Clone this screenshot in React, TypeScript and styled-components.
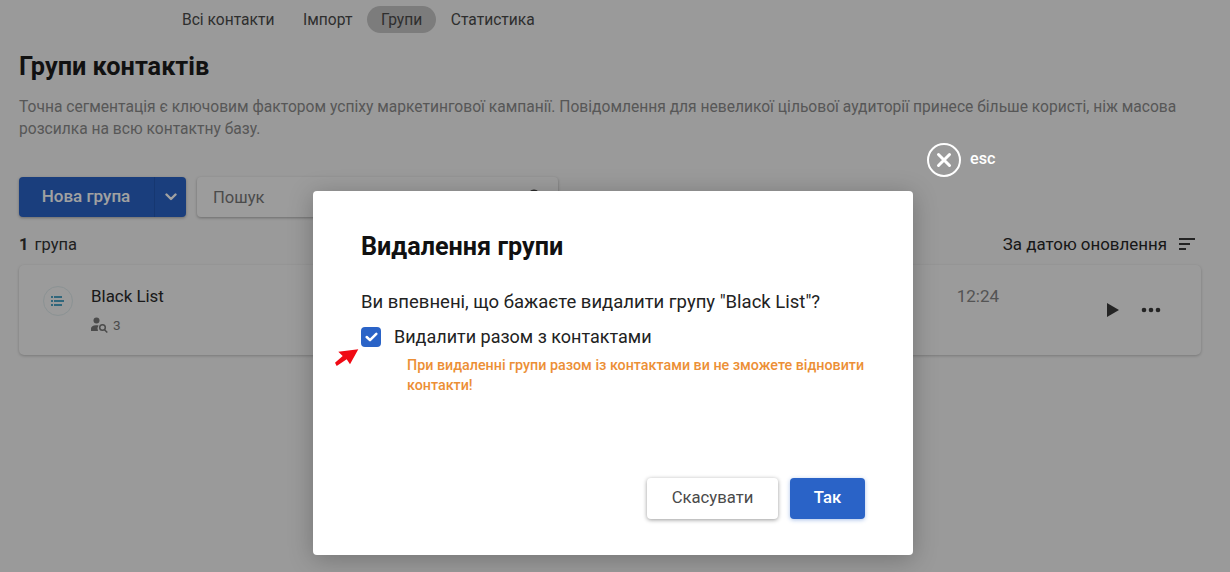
import styled, { createGlobalStyle } from 'styled-components';

const GlobalStyle = createGlobalStyle`
  html, body {
    margin: 0;
    padding: 0;
    background: #f4f4f4;
    font-family: Roboto, "Noto Sans", sans-serif;
    overflow: hidden;
  }
`;

const tabs = ['Всі контакти', 'Імпорт', 'Групи', 'Статистика'];

export default function App() {
  return (
    <Page>
      <GlobalStyle />
      <Nav>
        {tabs.map((tab) => (
          <Tab key={tab} $active={tab === 'Групи'}>
            {tab}
          </Tab>
        ))}
      </Nav>

      <Content>
        <PageTitle>Групи контактів</PageTitle>
        <Description>
          Точна сегментація є ключовим фактором успіху маркетингової кампанії. Повідомлення для невеликої цільової
          аудиторії принесе більше користі, ніж масова розсилка на всю контактну базу.
        </Description>

        <Toolbar>
          <SplitButton>
            <SplitLabel>Нова група</SplitLabel>
            <SplitArrow>
              <svg width="12" height="8" viewBox="0 0 12 8" fill="none">
                <path d="M1.5 1.5 6 6l4.5-4.5" stroke="#fff" strokeWidth="2.4" strokeLinecap="round" strokeLinejoin="round" />
              </svg>
            </SplitArrow>
          </SplitButton>
          <Search>
            <SearchText>Пошук</SearchText>
            <svg width="18" height="18" viewBox="0 0 18 18" fill="none">
              <circle cx="8" cy="8" r="5.5" stroke="#444" strokeWidth="1.8" />
              <path d="m12 12 4 4" stroke="#444" strokeWidth="1.8" />
            </svg>
          </Search>
        </Toolbar>

        <ListHeader>
          <Count>
            <b>1</b> група
          </Count>
          <Sort>
            За датою оновлення
            <svg width="16" height="12" viewBox="0 0 16 12" fill="#3a3a3a">
              <rect x="0" y="0" width="16" height="2" />
              <rect x="0" y="5" width="11" height="2" />
              <rect x="0" y="10" width="7" height="2" />
            </svg>
          </Sort>
        </ListHeader>

        <Card>
          <GroupIcon>
            <svg width="14" height="11" viewBox="0 0 14 11" fill="#4fa3c4">
              <rect x="0" y="0" width="2" height="2" />
              <rect x="3" y="0" width="8" height="2" />
              <rect x="0" y="4" width="2" height="2" />
              <rect x="3" y="4" width="10" height="2" />
              <rect x="0" y="8" width="2" height="2" />
              <rect x="3" y="8" width="8" height="2" />
            </svg>
          </GroupIcon>
          <GroupInfo>
            <GroupName>Black List</GroupName>
            <GroupMeta>
              <svg width="18" height="16" viewBox="0 0 18 16" fill="none">
                <circle cx="5.5" cy="3.5" r="3" fill="#777" />
                <path d="M0 14v-2.5C0 9.500 2 8.200 5 8.200c1 0 1.800.1 2.500.4A5 5 0 0 0 7 14z" fill="#777" />
                <circle cx="11.500" cy="10.500" r="2.800" stroke="#777" strokeWidth="1.500" />
                <path d="m13.500 12.700 2.800 2.800" stroke="#777" strokeWidth="1.500" />
              </svg>
              3
            </GroupMeta>
          </GroupInfo>
          <CardRight>
            <CardTime>12:24</CardTime>
            <CardActions>
              <svg width="14" height="16" viewBox="0 0 14 16" fill="#3a3a3a">
                <path d="M1 1v14l12-7z" />
              </svg>
              <svg width="20" height="6" viewBox="0 0 20 6" fill="#3a3a3a">
                <circle cx="3" cy="3" r="2.300" />
                <circle cx="10" cy="3" r="2.300" />
                <circle cx="17" cy="3" r="2.300" />
              </svg>
            </CardActions>
          </CardRight>
        </Card>
      </Content>

      <Overlay />

      <CloseHint>
        <CloseCircle>
          <svg width="16" height="16" viewBox="0 0 16 16" fill="none">
            <path d="m2.500 2.500 11 11m0-11-11 11" stroke="#fff" strokeWidth="3" strokeLinecap="round" />
          </svg>
        </CloseCircle>
        <EscLabel>esc</EscLabel>
      </CloseHint>

      <Modal>
        <ModalTitle>Видалення групи</ModalTitle>
        <Question>Ви впевнені, що бажаєте видалити групу "Black List"?</Question>
        <CheckRow>
          <CheckBox>
            <svg width="13" height="10" viewBox="0 0 13 10" fill="none">
              <path d="m1.700 5 3.300 3.200L11.300 1.800" stroke="#fff" strokeWidth="2.500" strokeLinecap="round" strokeLinejoin="round" />
            </svg>
            <Arrow width="26" height="20" viewBox="0 0 26 20" fill="#f00a14">
              <path d="M4.300 3.700 24.300 1.300 16 16.300 12.700 11.300 2.700 18 1 14.700 8.700 8z" />
            </Arrow>
          </CheckBox>
          <CheckLabel>Видалити разом з контактами</CheckLabel>
        </CheckRow>
        <Warning>При видаленні групи разом із контактами ви не зможете відновити контакти!</Warning>
        <ModalFooter>
          <CancelButton>Скасувати</CancelButton>
          <ConfirmButton>Так</ConfirmButton>
        </ModalFooter>
      </Modal>
    </Page>
  );
}

const Page = styled.div`
  position: relative;
  width: 1230px;
  height: 572px;
  overflow: hidden;
  color: #1f1f1f;
`;

const Nav = styled.nav`
  display: flex;
  align-items: center;
  height: 27px;
  padding: 6px 0 0 167.700px;
`;

const Tab = styled.div<{ $active?: boolean }>`
  height: 27px;
  line-height: 29px;
  padding: 0 14.300px;
  border-radius: 14px;
  font-size: 15.600px;
  color: #4a4a4a;
  background: ${({ $active }) => ($active ? '#c4c4c4' : 'transparent')};
`;

const Content = styled.main`
  padding: 0 29px 0 19px;
`;

const PageTitle = styled.h1`
  margin: 19px 0 0;
  font-size: 25.300px;
  line-height: 30px;
  font-weight: 700;
  color: #1c1c1c;
`;

const Description = styled.p`
  margin: 14px 0 0;
  font-size: 15.600px;
  line-height: 22px;
  color: #8a8a8a;
`;

const Toolbar = styled.div`
  display: flex;
  gap: 11px;
  margin-top: 37px;
`;

const SplitButton = styled.div`
  display: flex;
  width: 167px;
  height: 40px;
  border-radius: 4px;
  overflow: hidden;
  background: #2a63c7;
  box-shadow: 0 1px 3px rgba(0, 0, 0, 0.3);
  color: #fff;
`;

const SplitLabel = styled.div`
  flex: 1;
  line-height: 38px;
  text-align: center;
  font-size: 17px;
  font-weight: 500;
  padding-right: 1px;
`;

const SplitArrow = styled.div`
  width: 31px;
  display: flex;
  align-items: center;
  justify-content: center;
  border-left: 1px solid #2457b3;
`;

const Search = styled.div`
  display: flex;
  align-items: center;
  justify-content: space-between;
  width: 361px;
  height: 40px;
  box-sizing: border-box;
  padding: 0 14px 0 16px;
  border-radius: 4px;
  background: #f7f7f7;
  box-shadow: 0 1px 3px rgba(0, 0, 0, 0.3);
`;

const SearchText = styled.span`
  font-size: 16.600px;
  color: #777;
`;

const ListHeader = styled.div`
  display: flex;
  align-items: center;
  justify-content: space-between;
  height: 20px;
  margin-top: 17px;
`;

const Count = styled.div`
  font-size: 16.500px;
  color: #333;

  b {
    font-weight: 700;
    margin-right: 2px;
  }
`;

const Sort = styled.div`
  display: flex;
  align-items: center;
  gap: 12px;
  padding-right: 6px;
  font-size: 16.900px;
  color: #262626;
`;

const Card = styled.section`
  display: flex;
  align-items: flex-start;
  height: 90px;
  margin-top: 11px;
  box-sizing: border-box;
  padding: 20px 0 0 24px;
  border-radius: 5px;
  background: #f5f5f5;
  box-shadow: 0 1px 3px rgba(0, 0, 0, 0.22);
`;

const GroupIcon = styled.div`
  display: flex;
  align-items: center;
  justify-content: center;
  width: 28px;
  height: 28px;
  margin-top: 1px;
  border: 1px solid #dce8ea;
  border-radius: 50%;
`;

const GroupInfo = styled.div`
  margin-left: 18px;
`;

const GroupName = styled.div`
  font-size: 16.900px;
  line-height: 22px;
  color: #2a2a2a;
`;

const GroupMeta = styled.div`
  display: flex;
  align-items: center;
  gap: 4px;
  margin-top: 10px;
  font-size: 13.500px;
  color: #777;
`;

const CardRight = styled.div`
  display: flex;
  align-items: flex-start;
  margin-left: auto;
`;

const CardTime = styled.div`
  font-size: 17px;
  line-height: 22px;
  color: #858585;
  margin-right: 107px;
`;

const CardActions = styled.div`
  display: flex;
  align-items: center;
  gap: 21px;
  height: 30px;
  margin: 10px 40px 0 0;
`;

const Overlay = styled.div`
  position: absolute;
  inset: 0;
  background: rgba(0, 0, 0, 0.37);
`;

const CloseHint = styled.div`
  position: absolute;
  left: 927px;
  top: 143px;
  display: flex;
  align-items: center;
  gap: 9px;
  height: 34px;
  font-size: 16.200px;
  font-weight: 500;
  color: #fff;
`;

const EscLabel = styled.span`
  margin-top: -3px;
`;

const CloseCircle = styled.div`
  display: flex;
  align-items: center;
  justify-content: center;
  width: 34px;
  height: 34px;
  box-sizing: border-box;
  border: 2px solid #fff;
  border-radius: 50%;
`;

const Modal = styled.div`
  position: absolute;
  left: 313px;
  top: 191px;
  display: flex;
  flex-direction: column;
  width: 600px;
  height: 364px;
  box-sizing: border-box;
  padding: 41px 48px 36px;
  border-radius: 4px;
  background: #fff;
  box-shadow: 0 4px 24px rgba(0, 0, 0, 0.25);
`;

const ModalTitle = styled.h2`
  margin: 0;
  font-size: 25.200px;
  line-height: 30px;
  font-weight: 700;
  color: #111;
`;

const Question = styled.div`
  margin-top: 28px;
  font-size: 18.500px;
  line-height: 24px;
  color: #222;
`;

const CheckRow = styled.div`
  display: flex;
  align-items: center;
  gap: 13px;
  margin-top: 11px;
`;

const CheckBox = styled.div`
  position: relative;
  display: flex;
  align-items: center;
  justify-content: center;
  width: 20px;
  height: 20px;
  border-radius: 4px;
  background: #2a63c7;
`;

const Arrow = styled.svg`
  position: absolute;
  left: -27px;
  top: 21px;
`;

const CheckLabel = styled.div`
  font-size: 18px;
  line-height: 24px;
  color: #222;
`;

const Warning = styled.div`
  margin: 6px 0 0 46px;
  width: 470px;
  font-size: 14.300px;
  font-weight: 500;
  line-height: 20px;
  color: #ec8f36;
`;

const ModalFooter = styled.div`
  display: flex;
  justify-content: flex-end;
  gap: 12px;
  margin-top: auto;
`;

const CancelButton = styled.button`
  width: 131px;
  height: 41px;
  padding: 0 0 2px;
  border: none;
  border-radius: 4px;
  background: #fff;
  box-shadow: 0 1px 4px rgba(0, 0, 0, 0.4);
  font-family: inherit;
  font-size: 16.700px;
  color: #4a4a4a;
`;

const ConfirmButton = styled.button`
  width: 75px;
  height: 41px;
  padding: 0 0 2px;
  border: none;
  border-radius: 4px;
  background: #2a63c7;
  box-shadow: 0 1px 4px rgba(42, 99, 199, 0.4);
  font-family: inherit;
  font-size: 16.700px;
  font-weight: 500;
  color: #fff;
`;
